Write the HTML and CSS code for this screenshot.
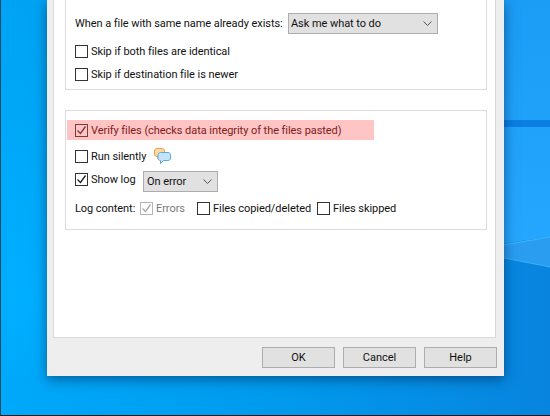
FILE: index.html
```html
<!DOCTYPE html>
<html lang="en">
<head>
  <meta charset="UTF-8">
  <title>Paste options</title>
  <link rel="stylesheet" href="styles.css">
</head>
<body>
  <!-- desktop wallpaper -->
  <svg class="wallpaper" width="550" height="416" viewBox="0 0 550 416">
    <defs>
      <linearGradient id="wall-base" x1="0" y1="0" x2="1" y2="0">
        <stop offset="0" stop-color="#00a9fa"/>
        <stop offset="0.5" stop-color="#009aed"/>
        <stop offset="1" stop-color="#0884de"/>
      </linearGradient>
      <linearGradient id="wall-left" x1="0" y1="0" x2="0" y2="1">
        <stop offset="0" stop-color="#00a3f3"/>
        <stop offset="0.8" stop-color="#00aeff"/>
        <stop offset="1" stop-color="#00a9fa"/>
      </linearGradient>
      <linearGradient id="wall-right" x1="0" y1="0" x2="0" y2="1">
        <stop offset="0" stop-color="#1b9df5"/>
        <stop offset="1" stop-color="#26a7ff"/>
      </linearGradient>
    </defs>
    <rect width="550" height="416" fill="url(#wall-base)"/>
    <rect width="47" height="376" fill="url(#wall-left)"/>
    <polygon points="440,0 550,0 550,237 440,252" fill="url(#wall-right)"/>
    <polygon points="440,252 550,237 550,267 504,258 440,245" fill="#2a9df0"/>
    <rect x="440" y="120" width="110" height="7" fill="#0b7fe3"/>
    <path d="M504 245L550 237M504 258L550 267" stroke="#4cc4ff" stroke-opacity="0.6" fill="none"/>
  </svg>

  <div class="window">
    <div class="panel">
      <!-- first group, scrolled past the top of the screen -->
      <div class="group group-top">
        <div class="cut-row">Overlap</div>
        <div class="row row-exists">
          <span class="text label-exists">When a file with same name already exists:</span>
          <div class="select select-wide">
            <span>Ask me what to do</span>
            <svg width="9" height="5" viewBox="0 0 9 5"><path d="M.5.5l4 4 4-4" fill="none" stroke="#555"/></svg>
          </div>
        </div>
        <label class="row row-skip"><span class="box"></span><span class="text">Skip if both files are identical</span></label>
        <label class="row row-skip2"><span class="box"></span><span class="text">Skip if destination file is newer</span></label>
      </div>

      <div class="group group-bottom">
        <label class="row highlight">
          <span class="box box-red">
            <svg width="11" height="11" viewBox="0 0 11 11"><path d="M1.500 5.500l3 3 5-7" fill="none" stroke="#7a3a3a" stroke-width="1.300"/></svg>
          </span>
          <span class="text text-red">Verify files (checks data integrity of the files pasted)</span>
        </label>
        <div class="row row-silent">
          <span class="box"></span><span class="text label-silent">Run silently</span>
          <svg width="17" height="17" viewBox="0 0 17 17">
            <path d="M3 .5h5c1.500 0 2.500 1 2.500 2.500v3c0 1.500-1 2.500-2.500 2.500H6L4 11V8.500H3C1.500 8.500.5 7.500.5 6V3C.5 1.500 1.500.5 3 .5z" fill="#fbd9a8" stroke="#ee9f45"/>
            <path d="M6.500 4.500h7.500c1.300 0 2.500 1 2.500 2.300v3.400c0 1.300-1.200 2.300-2.500 2.300H9.500l-3 3v-3c-1.500 0-2.500-1-2.500-2.300V6.800c0-1.300 1.200-2.300 2.500-2.300z" fill="#c5e4f8" stroke="#5fa8dc"/>
          </svg>
        </div>
        <div class="row row-log">
          <span class="box">
            <svg width="11" height="11" viewBox="0 0 11 11"><path d="M1.500 5.500l3 3 5-7" fill="none" stroke="#222" stroke-width="1.300"/></svg>
          </span>
          <span class="text label-log">Show log</span>
          <div class="select select-small">
            <span>On error</span>
            <svg width="9" height="5" viewBox="0 0 9 5"><path d="M.5.5l4 4 4-4" fill="none" stroke="#555"/></svg>
          </div>
        </div>
        <div class="row row-content">
          <span class="text label-content">Log content:</span>
          <span class="box box-off">
            <svg width="11" height="11" viewBox="0 0 11 11"><path d="M1.500 5.500l3 3 5-7" fill="none" stroke="#a8a8a8" stroke-width="1.300"/></svg>
          </span>
          <span class="text text-off">Errors</span>
          <span class="box"></span><span class="text label-copied">Files copied/deleted</span>
          <span class="box"></span><span class="text">Files skipped</span>
        </div>
      </div>
    </div>
    <div class="buttons">
      <button class="btn">OK</button>
      <button class="btn">Cancel</button>
      <button class="btn">Help</button>
    </div>
  </div>
</body>
</html>
```

FILE: styles.css
```css
html, body {
  height: 416px;
  overflow: hidden;
}
body {
  margin: 0;
  font-family: "Roboto", sans-serif;
  font-size: 11px;
  letter-spacing: -0.06px;
  color: #111;
  border-left: 1px solid #1a4a66;
  border-bottom: 1px solid #111;
  box-sizing: border-box;
}
.wallpaper {
  position: absolute;
  top: 0;
  left: 0;
  z-index: -1;
}
.window {
  width: 457px;
  height: 376px;
  margin-left: 46px;
  padding: 0 8px 0 6px;
  box-sizing: border-box;
  background: #eeeeee;
  box-shadow: 0 3px 12px rgba(0,30,70,0.55);
}
.panel {
  height: 338px;
  padding: 0 8px 0 12px;
  box-sizing: border-box;
  background: white;
  border: 1px solid #d9d9d9;
  border-top: none;
  overflow: hidden;
}
.group {
  border: 1px solid #dcdcdc;
  box-sizing: border-box;
  padding: 0 9px;
}
.group-top {
  display: flow-root;
  height: 90px;
  border-top: none;
  margin-bottom: 20px;
  margin-left: -1px;
}
.group-bottom {
  height: 120px;
  margin-left: -1px;
  padding: 9px 1px 0;
}
.cut-row {
  height: 16px;
  margin-top: -14px;
  line-height: 16px;
}
.row {
  display: flex;
  align-items: center;
  height: 20px;
}
.row-exists {
  height: 21px;
  margin-top: 11px;
}
.label-exists {
  width: 213px;
}
.row-skip {
  margin-top: 8px;
  height: 18px;
}
.row-skip2 {
  margin-top: 5px;
  height: 18px;
}
.box {
  display: flex;
  align-items: center;
  justify-content: center;
  flex: none;
  width: 13px;
  height: 13px;
  box-sizing: border-box;
  border: 1px solid #333;
  background: white;
  margin-right: 3px;
}
.text {
  white-space: nowrap;
}
.select {
  display: flex;
  align-items: center;
  justify-content: space-between;
  box-sizing: border-box;
  height: 21px;
  background: #e1e1e1;
  border: 1px solid #adadad;
  padding: 0 5px 0 2px;
}
.select-wide {
  width: 150px;
}
.select-small {
  width: 75px;
  padding-left: 3px;
}
.highlight {
  width: 307px;
  padding-left: 8px;
  box-sizing: border-box;
  background: #ffc4c4;
}
.box-red {
  background: transparent;
  border-color: #7a3a3a;
}
.text-red {
  color: #7c2020;
}
.row-silent, .row-log, .row-content {
  padding-left: 8px;
}
.row-silent {
  margin-top: 6px;
}
.label-silent {
  width: 63px;
}
.row-log {
  height: 21px;
  margin-top: 5px;
}
.row-log > .box, .row-log > .text {
  margin-bottom: 5px;
}
.label-log {
  width: 52px;
}
.row-content {
  margin-top: 6px;
}
.label-content {
  width: 65px;
}
.box-off {
  border-color: #b5b5b5;
}
.text-off {
  width: 41px;
  color: #7a7a7a;
}
.label-copied {
  width: 104px;
}
.buttons {
  display: flex;
  justify-content: flex-end;
  gap: 8px;
  margin: 9px -1px 0 0;
}
.btn {
  width: 73px;
  height: 21px;
  padding: 0;
  background: #e1e1e1;
  border: 1px solid #adadad;
  font: inherit;
  color: #111;
}
```
